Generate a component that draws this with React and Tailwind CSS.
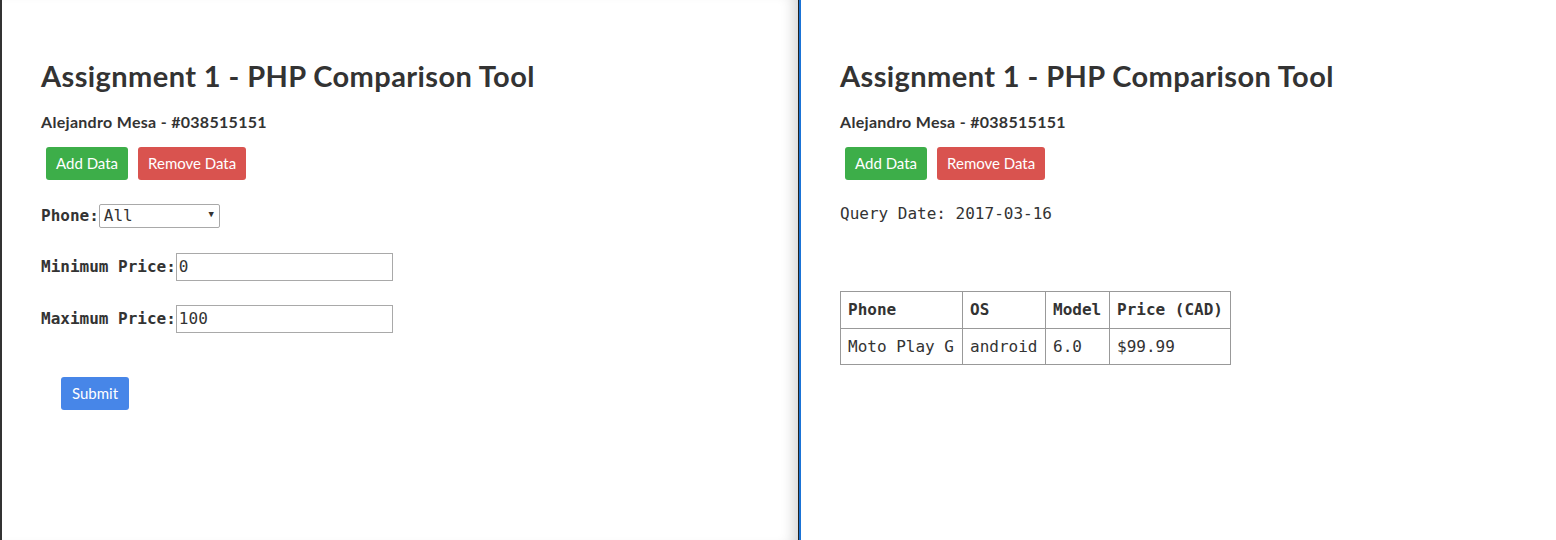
const head = "font-['Lato','Open_Sans',sans-serif] text-[#333]";
const mono = "font-['DejaVu_Sans_Mono','Liberation_Mono',monospace] text-[#333]";

const Header = () => (
  <div>
    <h1 className={`${head} text-[29px] font-bold leading-[32px] tracking-[0.4px]`}>
      Assignment 1 - PHP Comparison Tool
    </h1>
    <h4 className={`${head} text-[16px] font-bold mt-[21px] leading-[18px] tracking-[0.3px]`}>Alejandro Mesa - #038515151</h4>
    <div className="flex gap-[10px] ml-[5px] mt-[16px]">
      <button className="h-[33px] px-[10px] rounded-[3px] bg-[#3dae49] text-white text-[15px] font-['Lato',sans-serif]">
        Add Data
      </button>
      <button className="h-[33px] px-[10px] rounded-[3px] bg-[#d9534f] text-white text-[15px] font-['Lato',sans-serif]">
        Remove Data
      </button>
    </div>
  </div>
);

export default function App() {
  return (
    <div className="flex h-[540px] w-[1556px] bg-white overflow-hidden">
      <div className="w-[798px] h-full border-l-2 border-[#333] pl-[39px] pt-[60px] shadow-[inset_-14px_0_14px_-10px_rgba(0,0,0,0.18)]">
        <Header />
        <div className={`${mono} text-[16px] mt-[24px]`}>
          <div className="flex items-center h-[24px]">
            <span className="font-bold">Phone:</span>
            <div className="relative w-[121px] h-[24px] border border-[#a9a9a9] rounded-[2px] flex items-center pl-[4px]">
              All
              <span className="absolute right-[5px] top-[3px] text-[9px]">▼</span>
            </div>
          </div>
          <div className="flex items-center h-[28px] mt-[25px]">
            <span className="font-bold">Minimum Price:</span>
            <div className="w-[217px] h-[28px] border border-[#a9a9a9] flex items-center pl-[2px]">0</div>
          </div>
          <div className="flex items-center h-[28px] mt-[24px]">
            <span className="font-bold">Maximum Price:</span>
            <div className="w-[217px] h-[28px] border border-[#a9a9a9] flex items-center pl-[2px]">100</div>
          </div>
          <button className="mt-[44px] ml-[20px] h-[33px] px-[11px] rounded-[3px] bg-[#4786e8] text-white text-[15px] font-['Lato',sans-serif]">
            Submit
          </button>
        </div>
      </div>
      <div className="w-px h-full bg-[#222]" />
      <div className="flex-1 h-full border-l-2 border-[#1a73d6] pl-[39px] pt-[60px]">
        <Header />
        <p className={`${mono} text-[16px] mt-[24px] leading-[20px]`}>Query Date: 2017-03-16</p>
        <table className={`${mono} text-[16px] mt-[67px] border border-[#333] border-collapse`}>
          <thead>
            <tr className="h-[37px]">
              {["Phone", "OS", "Model", "Price (CAD)"].map((h) => (
                <th key={h} className="border border-[#999] px-[7px] text-left font-bold">{h}</th>
              ))}
            </tr>
          </thead>
          <tbody>
            <tr className="h-[36px]">
              <td className="border border-[#999] px-[7px] w-[122px]">Moto Play G</td>
              <td className="border border-[#999] px-[7px] w-[83px]">android</td>
              <td className="border border-[#999] px-[7px] w-[64px]">6.0</td>
              <td className="border border-[#999] px-[7px] w-[121px]">$99.99</td>
            </tr>
          </tbody>
        </table>
      </div>
    </div>
  );
}
